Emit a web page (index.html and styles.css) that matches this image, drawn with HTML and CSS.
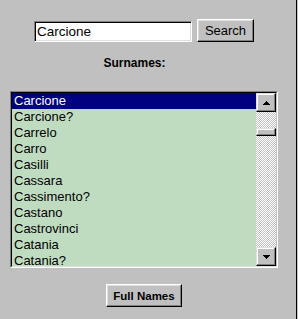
FILE: index.html
```html
<!DOCTYPE html>
<html>
<head>
<meta charset="utf-8">
<link rel="stylesheet" href="styles.css">
</head>
<body>
<div class="frame">
  <main class="panel">
    <form class="search-row">
      <input class="field" type="text" value="Carcione">
      <button class="btn btn-search" type="button">Search</button>
    </form>
    <div class="label">Surnames:</div>
    <div class="listbox">
      <div class="listbox-inner">
        <ul class="items">
          <li class="item selected">Carcione</li>
          <li class="item">Carcione?</li>
          <li class="item">Carrelo</li>
          <li class="item">Carro</li>
          <li class="item">Casilli</li>
          <li class="item">Cassara</li>
          <li class="item">Cassimento?</li>
          <li class="item">Castano</li>
          <li class="item">Castrovinci</li>
          <li class="item">Catania</li>
          <li class="item">Catania?</li>
        </ul>
        <div class="scrollbar">
          <div class="sb-btn">
            <svg width="7" height="4" viewBox="0 0 7 4" shape-rendering="crispEdges"><polygon points="3.5,0 7,4 0,4" fill="#000"/></svg>
          </div>
          <div class="track"><div class="thumb"></div></div>
          <div class="sb-btn">
            <svg width="7" height="4" viewBox="0 0 7 4" shape-rendering="crispEdges"><polygon points="0,0 7,0 3.5,4" fill="#000"/></svg>
          </div>
        </div>
      </div>
    </div>
    <div class="actions">
      <button class="btn btn-full" type="button">Full Names</button>
    </div>
  </main>
</div>
</body>
</html>
```
FILE: styles.css
```css
html, body {
  margin: 0;
  padding: 0;
  background: #c0c0c0;
}
body {
  width: 298px;
  height: 319px;
  overflow: hidden;
  font-family: "Liberation Sans", Arial, sans-serif;
  color: #000;
}
.frame {
  width: 296px;
  height: 319px;
  border-right: 1px solid #000;
}
.panel {
  width: 288px;
  display: flex;
  flex-direction: column;
  align-items: center;
  padding-top: 19px;
}
.search-row {
  display: flex;
  align-items: flex-end;
  gap: 5px;
  margin: 0;
}
.field {
  box-sizing: border-box;
  width: 158px;
  height: 21px;
  margin: 0;
  padding: 0 0 0 2px;
  background: #fff;
  border: 1px solid;
  border-color: #808080 #fff #fff #808080;
  box-shadow: inset 1px 1px #000, inset -1px -1px #dfdfdf;
  font-family: "Liberation Sans", Arial, sans-serif;
  font-size: 13.5px;
  color: #000;
  outline: none;
}
.btn {
  box-sizing: border-box;
  margin: 0;
  padding: 0;
  background: #c0c0c0;
  border: 1px solid;
  border-color: #fff #000 #000 #fff;
  box-shadow: inset -1px -1px #808080, inset 1px 1px #dfdfdf;
  font-family: "Liberation Sans", Arial, sans-serif;
  color: #000;
}
.btn-search {
  width: 57px;
  height: 23px;
  font-size: 13px;
}
.label {
  margin-top: 14px;
  padding-right: 19px;
  height: 14px;
  line-height: 14px;
  font-size: 12px;
  font-weight: bold;
}
.listbox {
  box-sizing: border-box;
  margin-top: 21px;
  width: 268px;
  height: 177px;
  border: 1px solid;
  border-color: #808080 #fff #fff #808080;
}
.listbox-inner {
  box-sizing: border-box;
  height: 175px;
  display: flex;
  border: 1px solid;
  border-color: #000 #c0c0c0 #dfdfdf #000;
}
.items {
  flex: 1;
  margin: 0;
  padding: 0;
  list-style: none;
  background: #c0dcc0;
  overflow: hidden;
}
.item {
  height: 16px;
  line-height: 16px;
  padding-left: 2px;
  font-size: 13px;
  white-space: nowrap;
}
.item.selected {
  background: #000080;
  color: #fff;
}
.scrollbar {
  width: 20px;
  display: flex;
  flex-direction: column;
}
.sb-btn {
  box-sizing: border-box;
  height: 19px;
  display: flex;
  align-items: center;
  justify-content: center;
  background: #c0c0c0;
  border: 1px solid;
  border-color: #dfdfdf #000 #000 #dfdfdf;
  box-shadow: inset -1px -1px #808080, inset 1px 1px #fff;
}
.sb-btn svg {
  display: block;
}
.track {
  flex: 1;
  background: repeating-conic-gradient(#c0c0c0 0 25%, #fff 0 50%) 0 0 / 2px 2px;
}
.thumb {
  box-sizing: border-box;
  margin-top: 16px;
  height: 8px;
  background: #c0c0c0;
  border: 1px solid;
  border-color: #dfdfdf #000 #000 #dfdfdf;
  box-shadow: inset -1px -1px #808080, inset 1px 1px #fff;
}
.actions {
  margin-top: 16px;
  display: flex;
  justify-content: center;
}
.btn-full {
  width: 76px;
  height: 23px;
  font-size: 11.5px;
  font-weight: bold;
}
```
